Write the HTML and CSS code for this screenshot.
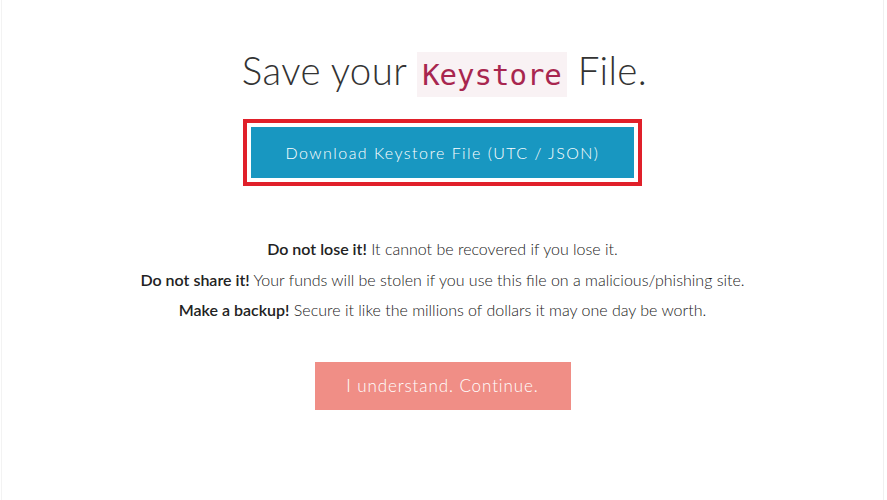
FILE: index.html
```html
<!DOCTYPE html>
<html>
<head>
<meta charset="utf-8">
<link rel="stylesheet" href="styles.css">
</head>
<body>
<main class="panel">
  <h1 class="title">Save your <code class="code">Keystore</code> File.</h1>
  <div class="download-wrap">
    <a class="btn-download">Download Keystore File (UTC / JSON)</a>
  </div>
  <div class="warnings">
    <p><strong>Do not lose it!</strong> It cannot be recovered if you lose it.</p>
    <p><strong>Do not share it!</strong> Your funds will be stolen if you use this file on a malicious/phishing site.</p>
    <p><strong>Make a backup!</strong> Secure it like the millions of dollars it may one day be worth.</p>
  </div>
  <a class="btn-continue">I understand. Continue.</a>
</main>
</body>
</html>
```
FILE: styles.css
```css
html, body {
  margin: 0;
  padding: 0;
  background: #fff;
}
body {
  font-family: Lato, "Open Sans", sans-serif;
  color: #333;
}
.panel {
  box-sizing: border-box;
  width: 883px;
  height: 500px;
  margin-left: 1px;
  border-left: 1px solid #f3f3f3;
  border-right: 1px solid #f0f0f0;
  display: flex;
  flex-direction: column;
  align-items: center;
  padding-top: 48px;
}
.title {
  margin: 0 0 0 4px;
  font-weight: 300;
  font-size: 38.5px;
  line-height: 44px;
  color: #333;
  letter-spacing: 0.35px;
}
.code {
  font-family: "DejaVu Sans Mono", monospace;
  font-size: 29px;
  color: #a8264f;
  background: #f9f2f4;
  padding: 6px 5px 5px;
  font-weight: normal;
  letter-spacing: 0;
}
.download-wrap {
  margin-top: 22px;
  border: 4px solid #e0202a;
  padding: 4px;
  background: #fff;
}
.btn-download {
  display: block;
  width: 383px;
  height: 51px;
  line-height: 51px;
  text-align: center;
  background: #1897c1;
  color: #fff;
  font-size: 16px;
  font-weight: 300;
  letter-spacing: 1.45px;
}
.warnings {
  margin-top: 48px;
  text-align: center;
  font-size: 16px;
  color: #1a1a1a;
  font-weight: 300;
}
.warnings p {
  margin: 0;
  line-height: 30.5px;
}
.warnings strong {
  font-weight: 600;
  color: #222;
}
.btn-continue {
  margin-top: 36px;
  display: block;
  width: 256px;
  height: 48px;
  line-height: 48px;
  text-align: center;
  background: #f08e86;
  color: #fff;
  font-size: 17px;
  font-weight: 300;
  letter-spacing: 0.9px;
}
```
